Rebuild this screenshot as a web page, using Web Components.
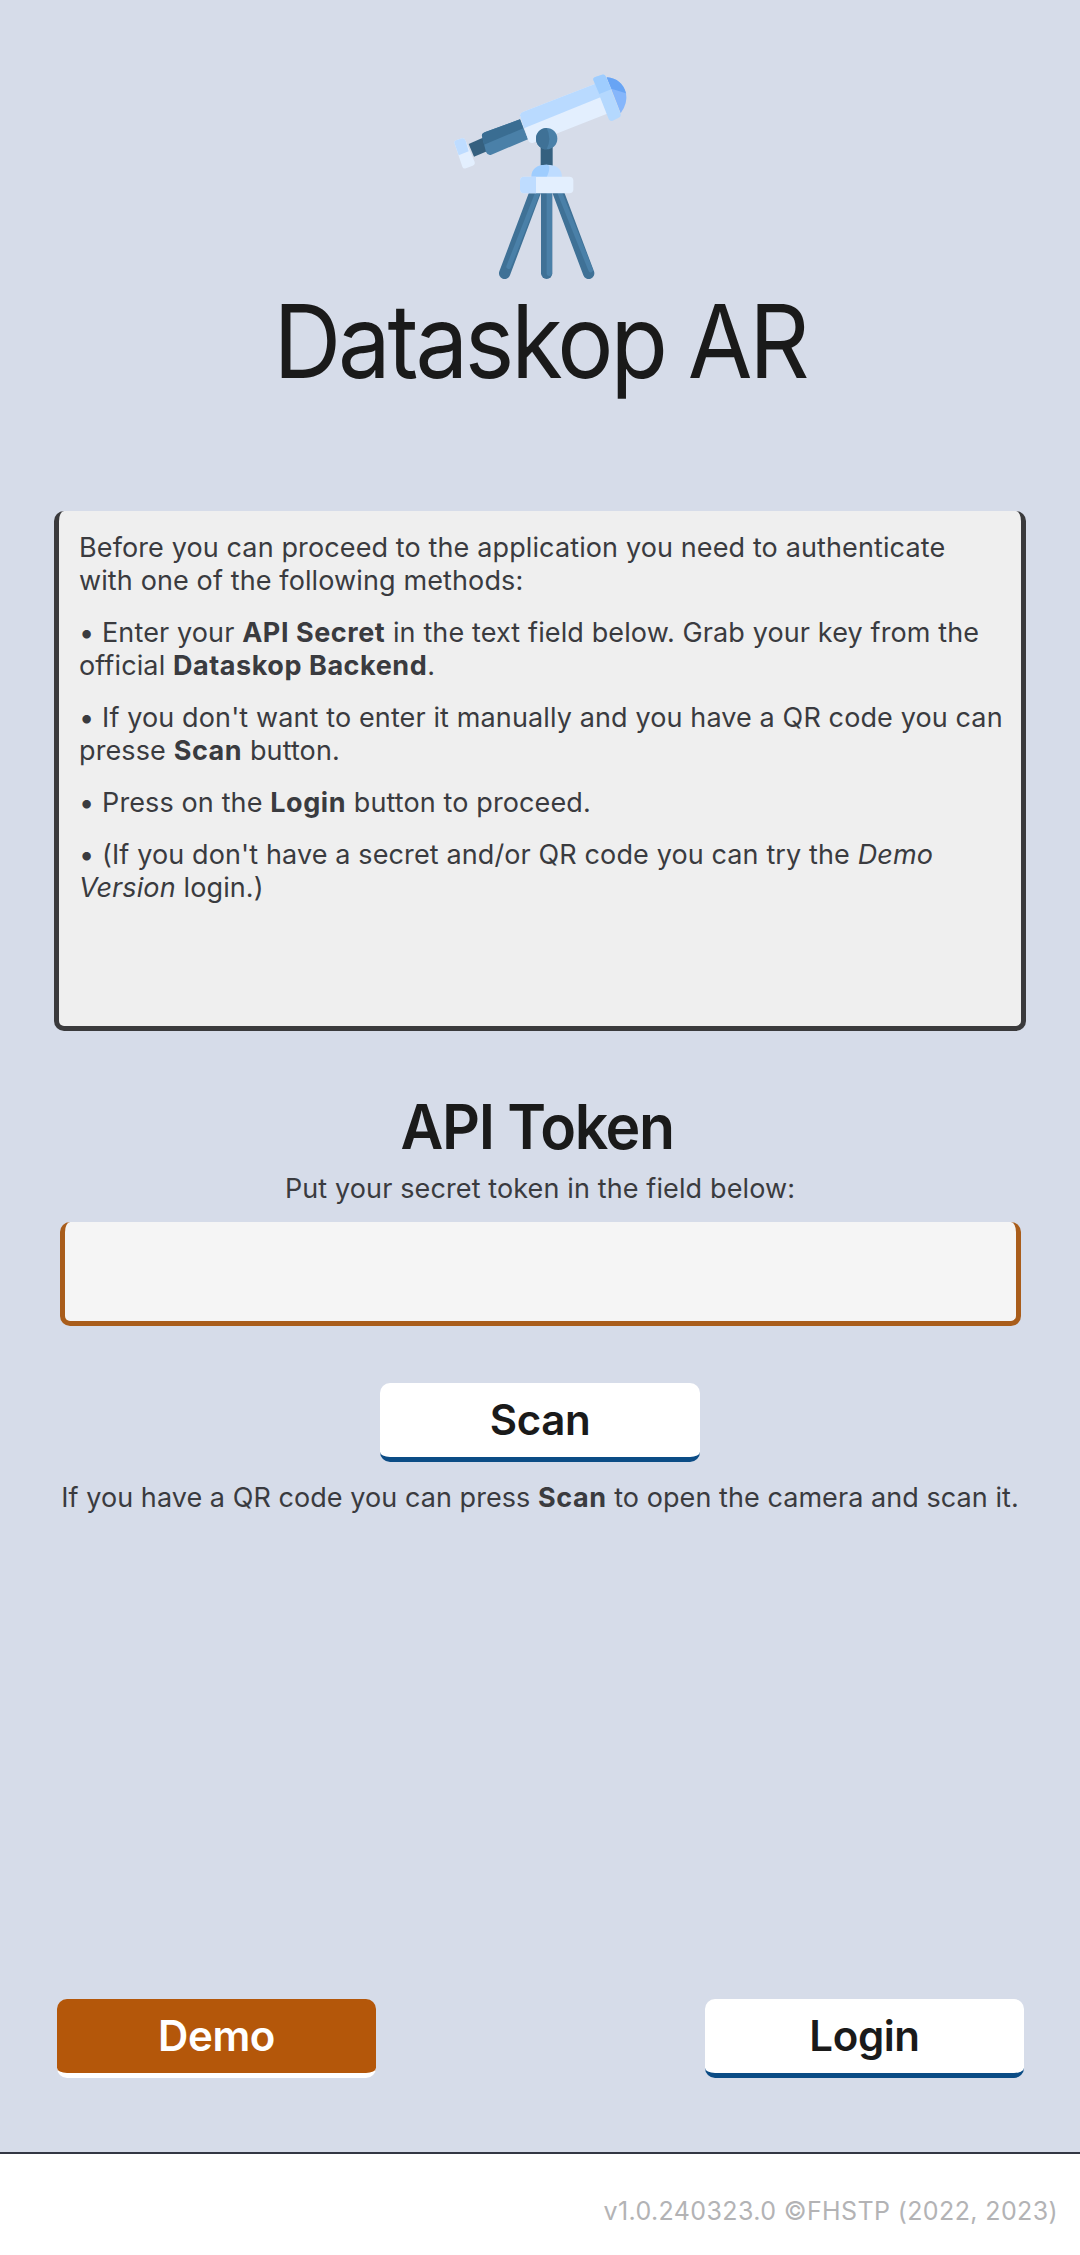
<!DOCTYPE html>
<html><head><meta charset="utf-8">
<style>
html,body{margin:0;padding:0;background:#d6dce9;}
body{font-family:Inter,"Liberation Sans",sans-serif;}
</style></head>
<body>
<login-screen></login-screen>
<script>
(function () {
  'use strict';

  class AppButton extends HTMLElement {
    constructor() {
      super();
      const shadowRoot = this.attachShadow({mode: 'open'});
      shadowRoot.innerHTML = `
        <style>
          :host {
            display: flex;
            align-items: center;
            justify-content: center;
            box-sizing: border-box;
            width: var(--button-width, 320px);
            height: 79px;
            padding-bottom: 1px;
            background: #fff;
            color: #1a1a1a;
            border-bottom: 5px solid #0b4c85;
            border-radius: 10px;
            font-size: 42px;
            font-weight: 600;
            letter-spacing: -0.4px;
          }
          :host([variant="orange"]) {
            background: #b4570a;
            color: #fff;
            border-bottom-color: #fff;
          }
        </style>
        <slot></slot>`;
    }
  }
  customElements.define('app-button', AppButton);

  class InfoBox extends HTMLElement {
    constructor() {
      super();
      const shadowRoot = this.attachShadow({mode: 'open'});
      shadowRoot.innerHTML = `
        <style>
          :host {
            display: block;
            box-sizing: border-box;
            margin: 0 54px;
            height: 520px;
            padding: 20px 12px 0 20px;
            background: #efefef;
            border: 5px solid #3a3a3c;
            border-top-width: 0;
            border-radius: 10px;
            color: #3a3b3f;
            font-size: 27px;
            line-height: 33px;
            letter-spacing: 0.12px;
          }
        </style>
        <slot></slot>`;
    }
  }
  customElements.define('info-box', InfoBox);

  class TelescopeLogo extends HTMLElement {
    constructor() {
      super();
      const shadowRoot = this.attachShadow({mode: 'open'});
      shadowRoot.innerHTML = `
        <style>
          :host { display: block; width: 240px; height: 240px; margin: 50px auto 0; }
          svg { display: block; }
        </style>
        <svg width="240" height="240" viewBox="0 0 720 720">
          <g stroke-linecap="round" fill="none">
            <path d="M346 425 L254 670" stroke="#3f7196" stroke-width="34"/>
            <path d="M380 425 L380 670" stroke="#3f7196" stroke-width="34"/>
            <path d="M414 425 L506 670" stroke="#3f7196" stroke-width="34"/>
            <path d="M352 430 L266 650" stroke="#4a80a8" stroke-width="14"/>
            <path d="M388 430 L388 670" stroke="#4a80a8" stroke-width="16"/>
            <path d="M420 430 L512 660" stroke="#4a80a8" stroke-width="14"/>
          </g>
          <path d="M146 282 L192 262 L210 300 L162 320 Z" fill="#35607f"/>
          <path d="M186 258 Q184 250 196 246 L300 208 L324 268 L214 314 Q204 318 198 306 Z" fill="#4a80a8"/>
          <path d="M186 258 Q184 250 196 246 L300 208 L310 235 L192 284 Z" fill="#3a6d92"/>
          <path d="M300 196 Q300 190 308 186 L530 100 L565 190 L340 278 Q332 282 326 274 Z" fill="#e3effe"/>
          <path d="M300 196 Q300 190 308 186 L530 100 L545 140 L312 235 Z" fill="#b9daff"/>
          <path d="M560 82 Q606 86 618 130 Q624 160 602 190 Z" fill="#86b6fb"/>
          <path d="M560 82 Q606 86 618 130 L574 116 Z" fill="#68a4f4"/>
          <path d="M520 90 Q518 84 526 81 L546 74 Q554 72 557 79 L602 192 Q604 200 596 203 L578 212 Q570 215 566 207 Z" fill="#b4d8fe"/>
          <path d="M520 90 Q518 84 526 81 L546 74 Q554 72 557 79 L574 118 L538 132 Z" fill="#9fcdfe"/>
          <path d="M103 278 Q102 272 110 270 L126 265 Q134 264 137 272 L164 336 Q166 344 158 347 L138 355 Q130 358 127 350 Z" fill="#e3effe"/>
          <path d="M103 278 Q102 272 110 270 L126 265 Q134 264 137 272 L146 304 L116 316 Z" fill="#bedcff"/>
          <rect x="362" y="280" width="36" height="70" fill="#35607f"/>
          <circle cx="380" cy="266" r="32" fill="#4a80a8"/>
          <path d="M380 234 A32 32 0 0 0 380 298 Q396 266 380 234 Z" fill="#3f7196"/>
          <path d="M334 382 Q334 344 380 344 Q426 344 426 382 Z" fill="#bedcff"/>
          <path d="M334 382 Q334 344 380 344 Q396 344 380 382 Z" fill="#9fcdfe"/>
          <rect x="300" y="380" width="160" height="50" rx="12" fill="#e3effe"/>
          <path d="M312 380 H348 V430 H312 Q300 430 300 418 V392 Q300 380 312 380 Z" fill="#bedcff"/>
        </svg>`;
    }
  }
  customElements.define('telescope-logo', TelescopeLogo);

  class LoginScreen extends HTMLElement {
    constructor() {
      super();
      const shadowRoot = this.attachShadow({mode: 'open'});
      shadowRoot.innerHTML = `
        <style>
          :host { display: flex; flex-direction: column; height: 2255px; box-sizing: border-box; }
          h1 { margin: -6px 0 0; text-align: center; font-size: 102px; font-weight: 400; color: #1a1a1a; line-height: 115px; letter-spacing: -3.5px; transform: scaleX(0.92); }
          info-box { margin-top: 112px; }
          p { margin: 0 0 19px; }
          b { letter-spacing: 0.55px; }
          h2 { margin: 61px 0 0; padding-right: 6px; text-align: center; font-size: 62px; font-weight: 600; color: #1a1a1a; line-height: 70px; letter-spacing: -1.4px; transform: scaleX(0.95); }
          .sub { margin: 10px 0 0; text-align: center; font-size: 27px; line-height: 33px; color: #3a3b3f; letter-spacing: 0.12px; }
          .field { box-sizing: border-box; height: 104px; margin: 17px 59px 0 60px; background: #f5f5f5; border: 5px solid #a95d1b; border-top-width: 0; border-radius: 10px; }
          .scan { margin: 57px auto 0; }
          .hint { margin: 19px 0 0; text-align: center; font-size: 27px; line-height: 33px; color: #3a3b3f; letter-spacing: 0.06px; }
          .actions { display: flex; justify-content: space-between; margin: auto 56px 0 57px; --button-width: 319px; }
          footer { margin-top: 74px; height: 103px; box-sizing: border-box; background: #fff; border-top: 2px solid #333744; padding: 42px 22px 0; text-align: right; font-size: 25px; line-height: 30px; color: #b3b3b5; letter-spacing: 0.38px; }
        </style>
        <telescope-logo></telescope-logo>
        <h1>Dataskop AR</h1>
        <info-box>
          <p>Before you can proceed to the application you need to authenticate<br>with one of the following methods:</p>
          <p>• Enter your <b>API Secret</b> in the text field below. Grab your key from the official <b>Dataskop Backend</b>.</p>
          <p>• If you don't want to enter it manually and you have a QR code you can presse <b>Scan</b> button.</p>
          <p>• Press on the <b>Login</b> button to proceed.</p>
          <p>• (If you don't have a secret and/or QR code you can try the <i>Demo Version</i> login.)</p>
        </info-box>
        <h2>API Token</h2>
        <div class="sub">Put your secret token in the field below:</div>
        <div class="field"></div>
        <app-button class="scan">Scan</app-button>
        <div class="hint">If you have a QR code you can press <b>Scan</b> to open the camera and scan it.</div>
        <div class="actions">
          <app-button variant="orange">Demo</app-button>
          <app-button>Login</app-button>
        </div>
        <footer>v1.0.240323.0 ©FHSTP (2022, 2023)</footer>`;
    }
  }
  customElements.define('login-screen', LoginScreen);
})();
</script>
</body></html>
